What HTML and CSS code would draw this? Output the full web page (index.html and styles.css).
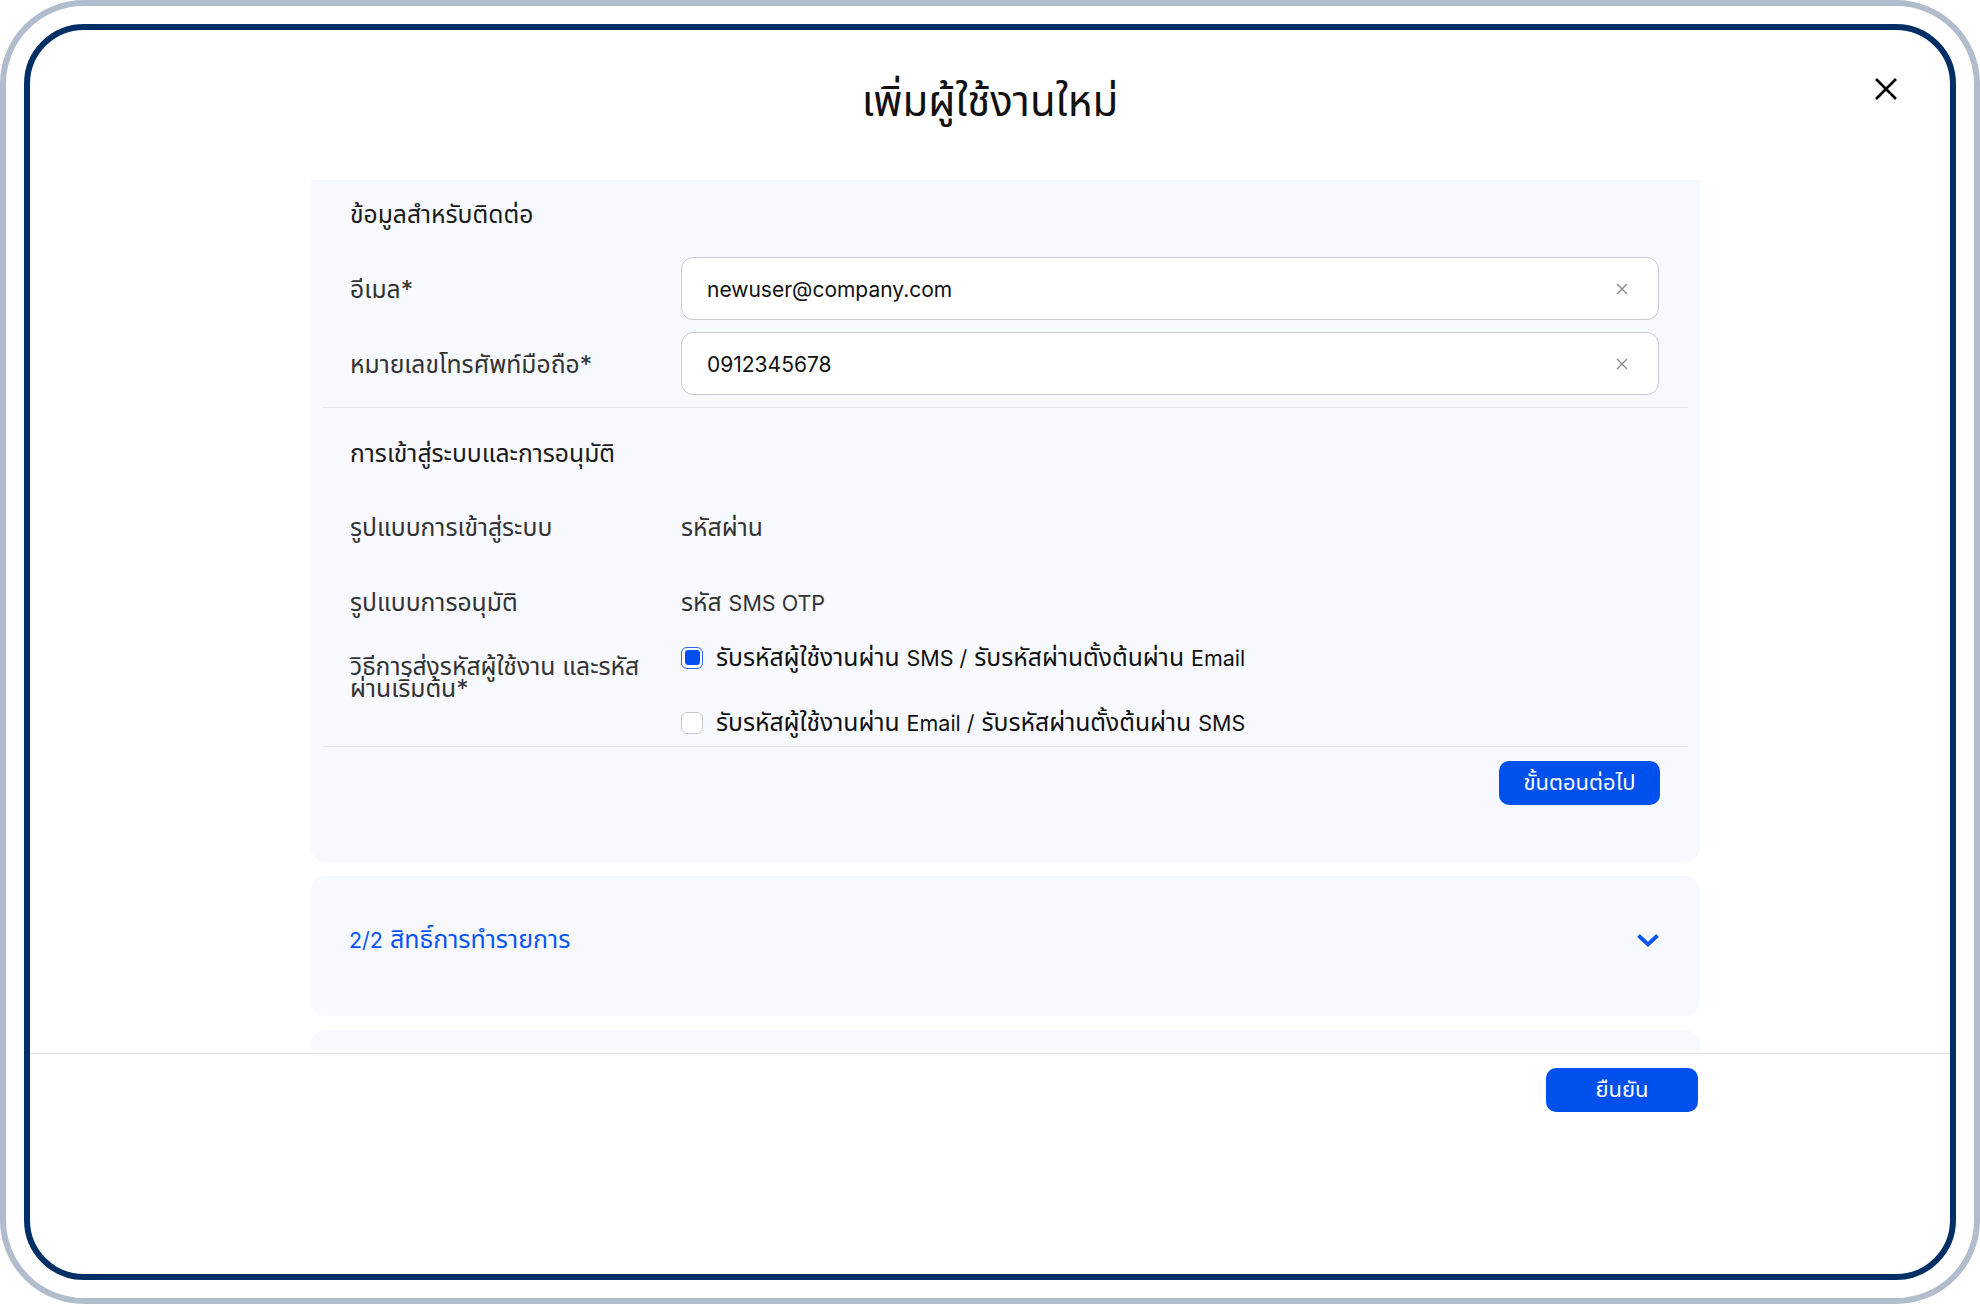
FILE: index.html
```html
<!DOCTYPE html>
<html lang="th">
<head>
  <meta charset="UTF-8">
  <meta name="viewport" content="width=device-width, initial-scale=1.0">
  <title>เพิ่มผู้ใช้งานใหม่</title>
  <link rel="stylesheet" href="styles.css">
</head>
<body>
  <div class="device">
    <div class="screen">
      <!-- หัวข้อ -->
      <div class="modal-head">
        <h1 class="modal-title">เพิ่มผู้ใช้งานใหม่</h1>
        <a href="javascript:;" class="close">
          <svg width="24" height="24" viewBox="0 0 24 24"><path d="M2 2L22 22M22 2L2 22" stroke="#000" stroke-width="2.6" fill="none"/></svg>
        </a>
      </div>

      <!-- เนื้อหา -->
      <div class="modal-body">
        <div class="panel panel-open">
          <div class="section section-contact">
            <div class="section-title first">ข้อมูลสำหรับติดต่อ</div>
            <div class="fields">
              <div class="row">
                <div class="label">อีเมล*</div>
                <div class="input">
                  <span class="input-text">newuser@company.com</span>
                  <svg class="clear" width="12" height="12" viewBox="0 0 12 12"><path d="M1 1L11 11M11 1L1 11" stroke="#8a8a8a" stroke-width="1.4" fill="none"/></svg>
                </div>
              </div>
              <div class="row">
                <div class="label">หมายเลขโทรศัพท์มือถือ*</div>
                <div class="input">
                  <span class="input-text">0912345678</span>
                  <svg class="clear" width="12" height="12" viewBox="0 0 12 12"><path d="M1 1L11 11M11 1L1 11" stroke="#8a8a8a" stroke-width="1.4" fill="none"/></svg>
                </div>
              </div>
            </div>
          </div>

          <div class="section section-login">
            <div class="section-title">การเข้าสู่ระบบและการอนุมัติ</div>
            <div class="fields">
              <div class="row">
                <div class="label">รูปแบบการเข้าสู่ระบบ</div>
                <div class="value">รหัสผ่าน</div>
              </div>
              <div class="row">
                <div class="label">รูปแบบการอนุมัติ</div>
                <div class="value">รหัส <span class="en">SMS OTP</span></div>
              </div>
              <div class="row row-top">
                <div class="label label-wrap">วิธีการส่งรหัสผู้ใช้งาน และรหัสผ่านเริ่มต้น*</div>
                <div class="options">
                  <label class="option">
                    <span class="check checked"><span></span></span>
                    <span>รับรหัสผู้ใช้งานผ่าน <span class="en">SMS /</span> รับรหัสผ่านตั้งต้นผ่าน <span class="en">Email</span></span>
                  </label>
                  <label class="option">
                    <span class="check"></span>
                    <span>รับรหัสผู้ใช้งานผ่าน <span class="en">Email /</span> รับรหัสผ่านตั้งต้นผ่าน <span class="en">SMS</span></span>
                  </label>
                </div>
              </div>
            </div>
          </div>

          <div class="actions">
            <a href="javascript:;" class="btn btn-next">ขั้นตอนต่อไป</a>
          </div>
        </div>

        <div class="panel panel-step">
          <span class="step-title"><span class="en">2/2</span> สิทธิ์การทำรายการ</span>
          <svg width="24" height="15" viewBox="0 0 24 15"><path d="M2.5 2.5L12 11.5L21.5 2.5" stroke="#0a55f0" stroke-width="3.8" fill="none"/></svg>
        </div>

        <div class="panel panel-more"></div>
      </div>

      <!-- ปุ่มยืนยัน -->
      <div class="modal-foot">
        <a href="javascript:;" class="btn btn-confirm">ยืนยัน</a>
      </div>
    </div>
  </div>
</body>
</html>
```

FILE: styles.css
```css
* {
  box-sizing: border-box;
}
body {
  margin: 0;
  background: #fff;
  font-family: Inter, "Noto Sans Thai", "Noto Sans", sans-serif;
  color: #222;
}
a {
  text-decoration: none;
}
.en {
  font-size: 21.5px;
}
.device {
  width: 1980px;
  height: 1304px;
  border: 6px solid #b1bdcd;
  border-radius: 84px;
  padding: 18px;
  background: #fff;
}
.screen {
  height: 100%;
  border: 6px solid #002f66;
  border-radius: 60px;
  overflow: hidden;
  display: flex;
  flex-direction: column;
}

/* หัวข้อ */
.modal-head {
  height: 150px;
  flex-shrink: 0;
  position: relative;
  display: flex;
  justify-content: center;
}
.modal-title {
  margin: 46px 0 0;
  font-size: 42px;
  font-weight: 400;
  line-height: 50px;
  color: #111;
}
.close {
  position: absolute;
  right: 52px;
  top: 47px;
  width: 24px;
  height: 24px;
}

/* เนื้อหา */
.modal-body {
  height: 873px;
  flex-shrink: 0;
  overflow: hidden;
  padding: 0 250px 0 281px;
  display: flex;
  flex-direction: column;
  gap: 14px;
}
.panel {
  background: #f7f9fe;
  border-radius: 14px;
  flex-shrink: 0;
}
.panel-open {
  border-radius: 0 0 14px 14px;
  padding: 0 12px 57px;
}
.section {
  padding: 0 27px 12px;
  border-bottom: 1px solid #e5e7eb;
}
.section-title {
  font-size: 24.7px;
  font-weight: 400;
  color: #1a1a1a;
  line-height: 30px;
  padding: 30px 0 28px;
}
.section-title.first {
  padding: 19px 0 28px;
}
.fields {
  display: flex;
  flex-direction: column;
  gap: 13px;
}
.section-contact .fields {
  gap: 12px;
}
.row {
  display: grid;
  grid-template-columns: 331px 1fr;
  align-items: center;
  min-height: 62px;
}
.section-contact .row {
  min-height: 63px;
}
.row-top {
  align-items: start;
}
.label {
  font-size: 24.7px;
  color: #333;
  padding-top: 3px;
}
.label-wrap {
  width: 310px;
  line-height: 22px;
  padding-top: 9px;
}
.value {
  font-size: 24.7px;
  color: #333;
  padding-top: 2px;
}
.input {
  height: 63px;
  margin-right: 2px;
  background: #fff;
  border: 1.5px solid #c9c9ce;
  border-radius: 12px;
  padding: 0 30px 0 25px;
  display: flex;
  align-items: center;
  justify-content: space-between;
}
.input-text {
  font-size: 21px;
  color: #111;
  padding-top: 1px;
}
.options {
  display: flex;
  flex-direction: column;
  gap: 42px;
}
.option {
  display: flex;
  align-items: center;
  gap: 13px;
  font-size: 24.7px;
  line-height: 22px;
  color: #111;
}
.check {
  width: 22px;
  height: 22px;
  border: 1.5px solid #c8c8cc;
  border-radius: 6px;
  background: #fff;
  flex-shrink: 0;
}
.check.checked {
  border-color: #2a63f6;
  padding: 2.5px;
}
.check.checked span {
  display: block;
  width: 100%;
  height: 100%;
  border-radius: 3px;
  background: #0050ee;
}
.actions {
  display: flex;
  justify-content: flex-end;
  padding: 14px 28px 0;
}
.btn {
  display: inline-flex;
  align-items: center;
  justify-content: center;
  height: 44px;
  border-radius: 10px;
  background: #0050ee;
  color: #fff;
  font-size: 22px;
}
.btn-next {
  width: 161px;
}
.panel-step {
  height: 140px;
  padding: 0 40px 12px 38px;
  display: flex;
  align-items: center;
  justify-content: space-between;
}
.step-title {
  font-size: 25px;
  font-weight: 400;
  color: #0a55f0;
}
.panel-more {
  height: 60px;
}

/* ปุ่มยืนยัน */
.modal-foot {
  border-top: 1px solid #e2e2e4;
  display: flex;
  justify-content: flex-end;
  padding: 14px 252px 0 0;
}
.btn-confirm {
  width: 152px;
}
```
